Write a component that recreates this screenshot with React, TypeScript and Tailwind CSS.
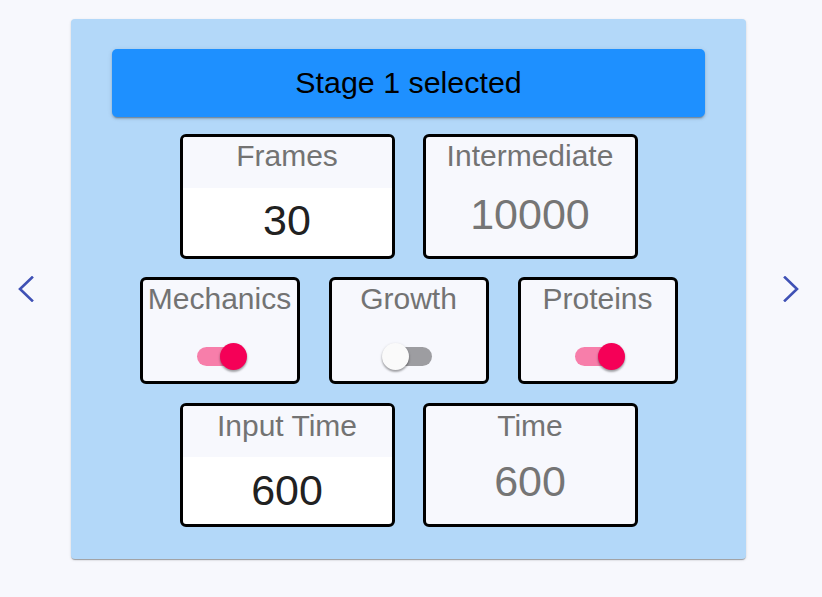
import { useState } from "react";

const FONT = { fontFamily: '"Liberation Sans", Arial, sans-serif' };

function Chevron({ dir }: { dir: "left" | "right" }) {
  return (
    <svg width="16" height="26" viewBox="0 0 16 26" fill="none">
      <polyline
        points={dir === "left" ? "14,1.5 2,13 14,24.5" : "2,1.5 14,13 2,24.5"}
        stroke="#3f51b5"
        strokeWidth="2.6"
        strokeLinecap="square"
      />
    </svg>
  );
}

function InputBox({ label, value, h, pt, pb, vt }: { label: string; value: string; h: string; pt: string; pb: string; vt: string }) {
  return (
    <div className={`w-[215px] ${h} flex flex-col overflow-hidden rounded-md border-[3px] border-black bg-white`}>
      <div className={`bg-[#f7f8fd] ${pt} ${pb} text-center text-[30px] leading-[34px] text-[#737373]`}>
        {label}
      </div>
      <div className={`${vt} text-center text-[43px] leading-[48px] text-[#212121]`}>{value}</div>
    </div>
  );
}

function ReadBox({ label, value, h, pt, gap }: { label: string; value: string; h: string; pt: string; gap: string }) {
  return (
    <div className={`w-[215px] ${h} flex flex-col rounded-md border-[3px] border-black bg-[#f7f8fd] ${pt}`}>
      <div className="text-center text-[30px] leading-[34px] text-[#737373]">{label}</div>
      <div className={`${gap} text-center text-[43px] leading-[48px] text-[#757575]`}>{value}</div>
    </div>
  );
}

function Toggle({ on, onClick }: { on: boolean; onClick: () => void }) {
  return (
    <button onClick={onClick} className="relative block h-[27px] w-[54px]">
      <span
        className={`absolute left-[4px] top-[4px] h-[19px] w-[46px] rounded-full ${
          on ? "bg-[#f77eaa]" : "bg-[#9d9da1]"
        }`}
      />
      <span
        className={`absolute top-0 h-[27px] w-[27px] rounded-full shadow-[0_2px_2px_rgba(0,0,0,0.25),0_1px_3px_rgba(0,0,0,0.2)] ${
          on ? "left-[27px] bg-[#f50057]" : "left-0 bg-[#fafafa]"
        }`}
      />
    </button>
  );
}

function SwitchBox({ label, on, onClick }: { label: string; on: boolean; onClick: () => void }) {
  return (
    <div className="flex h-[107px] w-[160px] flex-col items-center rounded-md border-[3px] border-black bg-[#f7f8fd] pt-[2px]">
      <div className="text-center text-[30px] leading-[34px] text-[#737373]">{label}</div>
      <div className="mt-[27px]">
        <Toggle on={on} onClick={onClick} />
      </div>
    </div>
  );
}

export default function App() {
  const [flags, setFlags] = useState({ mechanics: true, growth: false, proteins: true });
  const flip = (k: keyof typeof flags) => setFlags({ ...flags, [k]: !flags[k] });

  return (
    <div className="flex h-[597px] w-full items-start bg-[#f7f8fd] pt-[19px]" style={FONT}>
      <div className="flex h-[540px] items-center gap-[19px]">
        <button className="flex w-[52px] justify-center">
          <Chevron dir="left" />
        </button>

        <div className="flex h-[540px] w-[675px] flex-col items-center rounded-[4px] bg-[#b3d8f9] px-[41px] pt-[30px] shadow-[0_2px_1px_-1px_rgba(0,0,0,0.2),0_1px_1px_rgba(0,0,0,0.14),0_1px_3px_rgba(0,0,0,0.12)]">
          <div className="flex h-[68px] w-full items-center justify-center rounded-[5px] bg-[#1e90ff] text-[30.4px] text-black shadow-[0_3px_1px_-2px_rgba(0,0,0,0.2),0_2px_2px_rgba(0,0,0,0.14),0_1px_5px_rgba(0,0,0,0.12)]">
            Stage 1 selected
          </div>

          <div className="mt-[17px] flex gap-[28px]">
            <InputBox label="Frames" value="30" h="h-[125px]" pt="pt-[2px]" pb="pb-[15px]" vt="pt-[8px]" />
            <ReadBox label="Intermediate" value="10000" h="h-[125px]" pt="pt-[2px]" gap="mt-[17px]" />
          </div>

          <div className="mt-[18px] flex gap-[29px]">
            <SwitchBox label="Mechanics" on={flags.mechanics} onClick={() => flip("mechanics")} />
            <SwitchBox label="Growth" on={flags.growth} onClick={() => flip("growth")} />
            <SwitchBox label="Proteins" on={flags.proteins} onClick={() => flip("proteins")} />
          </div>

          <div className="mt-[19px] flex gap-[28px]">
            <InputBox label="Input Time" value="600" h="h-[124px]" pt="pt-[3px]" pb="pb-[14px]" vt="pt-[9px]" />
            <ReadBox label="Time" value="600" h="h-[124px]" pt="pt-[3px]" gap="mt-[14px]" />
          </div>
        </div>

        <button className="flex w-[52px] justify-center">
          <Chevron dir="right" />
        </button>
      </div>
    </div>
  );
}
